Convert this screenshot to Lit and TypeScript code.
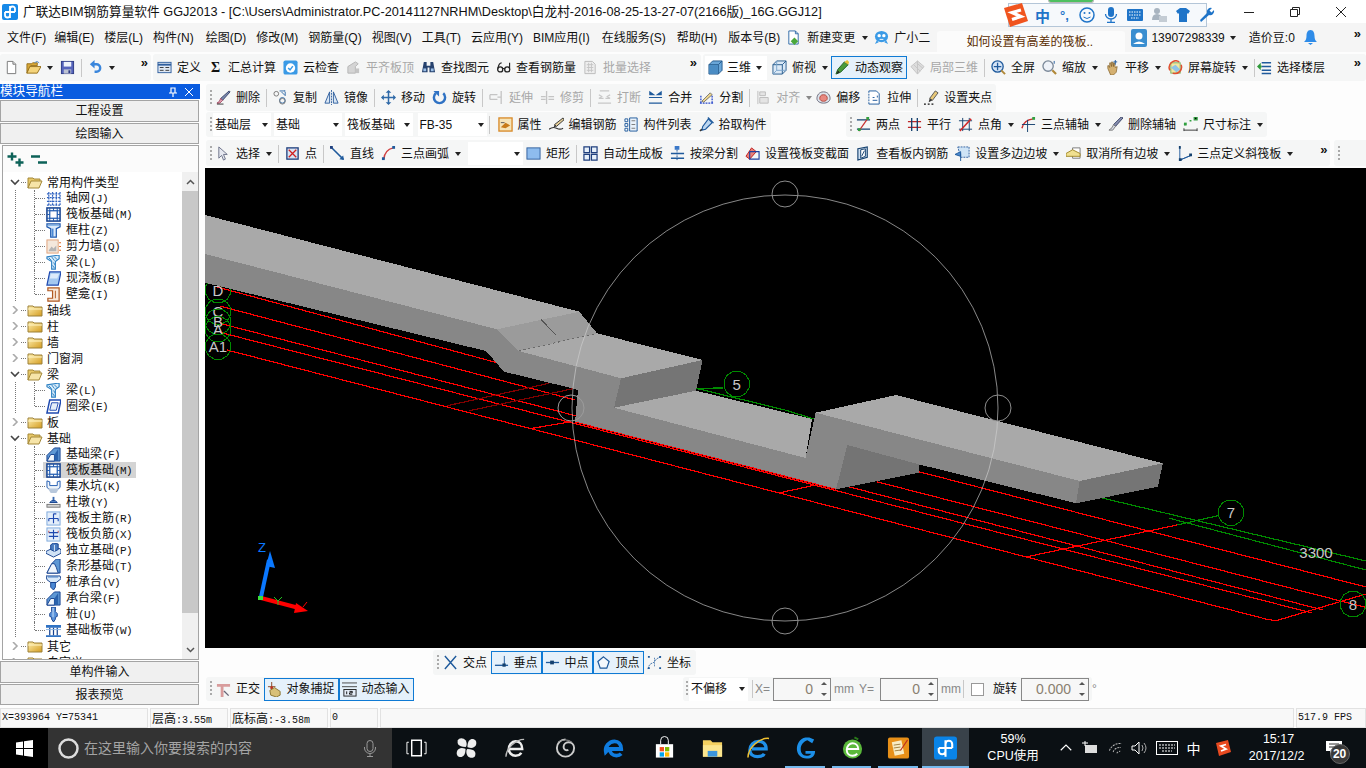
import { LitElement, html, css, svg } from "lit"
import { customElement } from "lit/decorators.js"

// toolbar and tree icons, all on a 16x16 box
const ICONS: Record<string, any> = {
  new: svg`<path d="M3.5 1.5h6l3 3v10h-9z" fill="#fff" stroke="#777"/><path d="M9.5 1.5v3h3" fill="#ddd" stroke="#777"/>`,
  open: svg`<path d="M1 4h5l1-1h5v3H5l-4 8z" fill="#d8a838" stroke="#96701c"/><path d="M4 7h12l-4 7H1z" fill="#f4d47c" stroke="#96701c"/><path d="M9 3q3-3 5 0" stroke="#5a8fd0" fill="none"/>`,
  save: svg`<rect x="1.5" y="1.5" width="13" height="13" fill="#5664bc" stroke="#2c3a84"/><rect x="4" y="2" width="8" height="5" fill="#eef2fa"/><rect x="4" y="10" width="8" height="4.5" fill="#bcc2d2"/><rect x="9" y="11" width="2" height="3" fill="#2c3a84"/>`,
  undo: svg`<path d="M6 4.5h3a4 4 0 0 1 0 8H7" fill="none" stroke="#3a86dc" stroke-width="2.6"/><path d="M7 0L2 4.5 7 9z" fill="#3a86dc"/>`,
  def: svg`<rect x="1" y="2.5" width="14" height="11" fill="#dfe8f4" stroke="#2f5f9e"/><path d="M1 5h14" stroke="#2f5f9e" stroke-width="2"/><path d="M3 8h4M3 11h4M9 8h4M9 11h4" stroke="#333"/>`,
  sigma: svg`<text x="8" y="13" text-anchor="middle" font-family="Liberation Serif" font-size="15" font-weight="700" fill="#111">Σ</text>`,
  cloud: svg`<rect x="0.5" y="0.5" width="15" height="15" rx="2" fill="#3a9ae6"/><circle cx="8" cy="8.5" r="5" fill="#fff"/><path d="M5.5 8.5l2 2 3-4" fill="none" stroke="#3a9ae6" stroke-width="1.6"/>`,
  flush: svg`<path d="M2 7l8-5 3 2-3 3v7H2z" fill="#d4d4d4" stroke="#b4b4b4"/><path d="M10 9h4v5h-4z" fill="#c4c4c4"/>`,
  find: svg`<path d="M3 2h3v4h4V2h3l2 11H9V8H7v5H1z" fill="#26426e"/><rect x="2.5" y="9" width="3" height="3" fill="#9cc0e8"/><rect x="10.5" y="9" width="3" height="3" fill="#9cc0e8"/>`,
  glasses: svg`<circle cx="4.5" cy="10" r="2.7" fill="none" stroke="#222" stroke-width="1.4"/><circle cx="12" cy="10" r="2.7" fill="none" stroke="#222" stroke-width="1.4"/><path d="M7 9h2.5M2 9q1-6 4-6M14.5 9V3" fill="none" stroke="#222" stroke-width="1.2"/>`,
  batch: svg`<path d="M2 1.5h8l3 3v10H2z" fill="#eee" stroke="#bbb"/><path d="M4 5h7M4 8h7M4 11h7M6 3v10M9 3v10" stroke="#c4c4c4"/>`,
  cube: svg`<path d="M1 5l4-4h10v10l-4 4H1z" fill="#6aa6d8" stroke="#245a8c"/><path d="M1 5h10v10M11 5l4-4" fill="none" stroke="#245a8c"/><path d="M1.5 5.5h9v9h-9z" fill="#4a8cc4"/>`,
  top: svg`<path d="M1 5l4-4h10v10l-4 4H1z" fill="#dbe9f6" stroke="#245a8c"/><path d="M1 5h10v10M11 5l4-4" fill="none" stroke="#245a8c"/><path d="M5 1v10l-4 4M5 11h10" fill="none" stroke="#7aa4cc"/>`,
  orbit: svg`<path d="M1 15l2-5 7-8 4 3-8 8z" fill="#4a9a3a" stroke="#1f5f24"/><path d="M10 2l4 3 1-3-2-2z" fill="#e8c038"/><path d="M2 15l3-2-2-2z" fill="#222"/>`,
  local3d: svg`<path d="M1 7l7-6 7 6-7 8z" fill="#ddd" stroke="#c4c4c4"/><path d="M4 5l7 7M7 3l7 6M8 1v14" stroke="#c4c4c4"/>`,
  zoomfull: svg`<circle cx="7" cy="7" r="6" fill="#d4e4f6" stroke="#1f5a9c" stroke-width="1.4"/><path d="M7 3v8M3 7h8" stroke="#1f5a9c" stroke-width="1.4"/><path d="M11 11l4 4" stroke="#b08838" stroke-width="2"/>`,
  zoom: svg`<circle cx="6.5" cy="6.5" r="5.5" fill="#eef2f8" stroke="#7a8898" stroke-width="1.4"/><path d="M11 11l4 4" stroke="#b08838" stroke-width="2.2"/><path d="M13 1v3" stroke="#1f5a9c"/>`,
  pan: svg`<path d="M3 9V6l1 0 1 2V3h1l1 4V2h1l1 5V3h1l1 5 2-1-1 6-3 3H6z" fill="#d4b070" stroke="#7a5820" stroke-width=".7"/><path d="M11 0v5M9 2h4" stroke="#1f5a9c"/>`,
  spin: svg`<rect x="3" y="3" width="10" height="11" fill="#f4e6a0" stroke="#7ab060"/><path d="M3 8l5-3 5 5-4 3z" fill="#8fc4e8"/><path d="M2 11a7 7 0 0 1 10-9" fill="none" stroke="#e05030" stroke-width="1.6"/><path d="M14 5a7 7 0 0 1-9 9" fill="none" stroke="#e05030" stroke-width="1.6"/>`,
  floor: svg`<path d="M5 3h10M5 7h10M5 11h10M5 14.5h10" stroke="#1f5a9c" stroke-width="1.6"/><path d="M0 7l4-4v8z" fill="#2f9a3a"/><path d="M2 7h3" stroke="#2f9a3a" stroke-width="2"/>`,
  erase: svg`<path d="M14 1l1 1-8 9-2-2z" fill="#7a88b0" stroke="#3a4468"/><path d="M5 9l2 2-3 3H1q3-1 4-5z" fill="#e8a8b8" stroke="#a04860"/><path d="M1 15h7" stroke="#333"/>`,
  copy: svg`<circle cx="3.5" cy="4" r="2.5" fill="none" stroke="#777"/><circle cx="10" cy="11" r="3" fill="none" stroke="#2f6aa8"/><circle cx="10" cy="12" r="3" fill="none" stroke="#777"/><path d="M7 1h6l-1 0M13 2v4M9 2l4 4" fill="none" stroke="#2f6aa8"/>`,
  mirror: svg`<path d="M6 2v12H1zM10 2v12h5z" fill="#d8e6f4" stroke="#2f5f9e"/><path d="M8 0v16" stroke="#2f5f9e" stroke-dasharray="2 1"/>`,
  move: svg`<path d="M8 1v14M1 8h14" stroke="#2f6aa8" stroke-width="1.6"/><path d="M8 0l3 3H5zM8 16l3-3H5zM0 8l3 3V5zM16 8l-3 3V5z" fill="#2f6aa8"/>`,
  rot: svg`<path d="M4 3.5a6 6 0 1 0 8 0" fill="none" stroke="#2f72c4" stroke-width="2.6"/><path d="M1.500 1h6v6z" fill="#2f72c4"/>`,
  extend: svg`<path d="M1 5h8M1 10h8M1 5v5M13 1v14M9 7.500h4" fill="none" stroke="#c4c4c4" stroke-width="1.4"/>`,
  trim: svg`<path d="M7 1v14M1 7h5M1 10h5M9 7h6M9 10h6" fill="none" stroke="#c4c4c4" stroke-width="1.4"/>`,
  brk: svg`<path d="M3 1h10M1 14h14M3 9h4M9 9h4M2 5l3 2-3 2M14 5l-3 2 3 2" fill="none" stroke="#c8c8c8" stroke-width="1.4"/>`,
  merge: svg`<path d="M1 8h14M1 14h14M2 2l4 3H2zM14 2l-4 3h4z" fill="#1f5a9c" stroke="#1f5a9c" stroke-width="1.3"/>`,
  split: svg`<path d="M1 14h14M2 6v9M14 6v9" stroke="#2a4acc" stroke-width="1.4" stroke-dasharray="2 1"/><path d="M3 12l9-9 2 2-9 8z" fill="#f0d890" stroke="#555" stroke-width=".8"/>`,
  align: svg`<path d="M2 1v14M4 2h6v4H4zM4 8h9v6H4z" fill="#e4e4e4" stroke="#bcbcbc"/>`,
  offset: svg`<path d="M8 2c5 0 7 4 7 7s-3 5-7 5-7-2-7-5 2-7 7-7z" fill="#dde4ec" stroke="#667"/><path d="M8 5c3 0 4 2 4 4s-2 3-4 3-4-1-4-3 1-4 4-4z" fill="#e88880" stroke="#b04a40"/>`,
  stretch: svg`<path d="M2 1h8l3 3v11H2" fill="#fff" stroke="#1f5a9c"/><path d="M2 1v14" stroke="#1f5a9c" stroke-dasharray="2 1"/><path d="M6 8h2M6 11h5M11 6v2" stroke="#1f5a9c"/>`,
  grippt: svg`<path d="M12 1l3 2-6 8-3-2z" fill="#e8c878" stroke="#555"/><path d="M6 9l3 2-4 2z" fill="#333"/><path d="M0 15h2M4 15h2M8 15h2" stroke="#111" stroke-width="1.4"/>`,
  attr: svg`<rect x="1" y="1" width="14" height="14" fill="#f6e4b8" stroke="#d88a28" stroke-width="1.4"/><path d="M3 11l5-5 5 3-5 3z" fill="#c87a18"/><path d="M3 6h4" stroke="#555"/>`,
  pen: svg`<path d="M15 1l1 2-8 7-2-2z" fill="#e8d098" stroke="#333"/><path d="M6 8l2 2-3 1z" fill="#333"/><path d="M0 13q4-3 8-1t7 0" fill="none" stroke="#333" stroke-width="1.2"/>`,
  list: svg`<path d="M1 2h3v3H1zM1 7h3v3H1zM1 12h3v3H1z" fill="#fff" stroke="#1f5a9c"/><path d="M6 1h8v14H6z" fill="#eaf2fa" stroke="#1f5a9c"/><path d="M8 4h4M8 8h4M8 12h4" stroke="#777"/>`,
  pick: svg`<path d="M10 2l4 4-7 7-4 1 1-4z" fill="#bcd6f0" stroke="#1f5a9c" stroke-width="1.2"/><path d="M9 1l1-1 6 6-1 1z" fill="#1f5a9c"/><path d="M1 15l2-2" stroke="#333" stroke-width="1.6"/>`,
  twopt: svg`<path d="M1 3h14M1 13h14" stroke="#14406e" stroke-width="1.3"/><path d="M3 15L13 1" stroke="#c83030" stroke-width="1.3"/><path d="M11 0h3v3h-3zM2 12h3v3H2z" fill="#30a040"/>`,
  para: svg`<path d="M1 5h14M1 11h14" stroke="#c02828" stroke-width="1.4"/><path d="M5 1v14M11 1v14" stroke="#14406e" stroke-width="1.4"/>`,
  angle: svg`<path d="M1 4h14M1 13h14M5 1v14M12 1v14" stroke="#14406e"/><path d="M2 15L14 2" stroke="#d02828" stroke-width="1.6"/>`,
  arcaux: svg`<path d="M1 12Q3 3 13 2" fill="none" stroke="#c83030" stroke-width="1.6"/><path d="M1 8h14M7 3v13" stroke="#14406e"/><path d="M12 0h3v3h-3z" fill="#30a040"/>`,
  brush2: svg`<path d="M14 0l2 1-8 9-2-2z" fill="#888fb0" stroke="#3a4468"/><path d="M6 8l2 2-3 4H1q4-2 5-6z" fill="#d8dce8" stroke="#777"/>`,
  dim: svg`<path d="M1 12v3M15 12v3M1 14h14" stroke="#333"/><path d="M1 8l2 0M7 4h2M12 0h3v3h-3z" stroke="#30a040" stroke-width="1.4"/><path d="M1 6h3v3H1z" fill="#30a040"/>`,
  cursor: svg`<path d="M3 1v12l3-3 2 5 2-1-2-5h4z" fill="#e6e8f0" stroke="#6a7088"/>`,
  point: svg`<rect x="2" y="2" width="12" height="12" fill="#d8e4f4" stroke="#1f3f7e" stroke-width="1.4"/><path d="M4 4l8 8M12 4l-8 8" stroke="#d02020" stroke-width="1.4"/>`,
  line: svg`<path d="M1 1l13 13" stroke="#1f5a9c" stroke-width="1.6"/><path d="M15 15l-5-1 4-4z" fill="#1f5a9c"/><path d="M0 0h3v3H0z" fill="#1f3f7e"/>`,
  arc: svg`<path d="M3 14Q4 4 13 2" fill="none" stroke="#d04040" stroke-width="1.6"/><path d="M1 12h3v3H1z" fill="#1f5a9c"/><path d="M12 0h3v3h-3z" fill="#1f5a9c"/>`,
  rect: svg`<rect x="1" y="2" width="14" height="12" fill="#8ebcee" stroke="#2f5f9e"/>`,
  auto: svg`<path d="M1 1h6v6H1zM9 1h6v6H9zM1 9h6v6H1zM9 9h6v6H9z" fill="#e6f0fa" stroke="#1f3f7e" stroke-width="1.3"/>`,
  bsplit: svg`<rect x="5" y="0" width="5" height="4" fill="#3a78c8"/><path d="M1 8h14M1 13h14" stroke="#1f5a9c" stroke-width="1.6"/><path d="M7.500 4v12" stroke="#1f5a9c" stroke-dasharray="2 1"/>`,
  varsec: svg`<path d="M7 2l5 4-7 8-4-3z" fill="#e88078" stroke="#c02020"/><path d="M5 6h10v8H5z" fill="none" stroke="#1f3f9e" stroke-width="1.2"/>`,
  inner: svg`<path d="M2 3l10-2v11L2 15z" fill="#cfe0f2" stroke="#14406e" stroke-width="1.2"/><path d="M5 4l5-1v8l-5 2z" fill="#fff" stroke="#14406e"/><path d="M9 5l-3 6" stroke="#14406e"/>`,
  slopes: svg`<path d="M3 1l12 0v11H6z" fill="#cfe4f6" stroke="#2f5f9e" stroke-dasharray="2 1"/><path d="M0 9l6-3v5zM6 16V8" stroke="#1f5a9c" fill="#4a88cc"/>`,
  noslope: svg`<path d="M7 2h8v11H7z" fill="#fff" stroke="#777"/><path d="M0 8l7-4 8 4v3H0z" fill="#f0e090" stroke="#a08828"/>`,
  threept: svg`<path d="M3 1v14M3 15l12-5z" fill="#bcd8f6" stroke="#1f5a9c"/><path d="M2 0h2v3H2zM2 13h3v3H2zM13 8h3v3h-3z" fill="#14406e"/>`,
  cross: svg`<path d="M2 1l12 14M14 1L2 15" stroke="#1f5a9c" stroke-width="1.5"/>`,
  perp: svg`<path d="M1 11h14" stroke="#1f5a9c" stroke-width="1.4"/><path d="M11 1v10" stroke="#1f5a9c"/><rect x="9" y="9" width="3.500" height="3.500" fill="#14406e"/>`,
  mid: svg`<path d="M1 8h14" stroke="#1f5a9c" stroke-width="1.4"/><rect x="5.500" y="6" width="4" height="4" fill="#14406e"/>`,
  vertex: svg`<path d="M8 2l6 5-2.500 7h-7L2 7z" fill="#f4f8fc" stroke="#1f5a9c" stroke-width="1.3"/>`,
  coord: svg`<path d="M1 15c2-8 5-5 7-8s2-3 7-5" fill="none" stroke="#1f5a9c" stroke-dasharray="2 1"/><path d="M1 1h2v2H1zM13 1h2v2h-2zM1 13h2v2H1zM13 13h2v2h-2z" fill="#1f5a9c"/><path d="M8 3v10" stroke="#1f5a9c" stroke-dasharray="1 1"/>`,
  ortho: svg`<path d="M1 2h14v3H8v11H5V5H1z" fill="#d89c9c"/><path d="M9 9l5 5-1 1-5-5z" fill="#667"/>`,
  snap: svg`<path d="M5 0v11M1 5h8" stroke="#884422"/><circle cx="5" cy="6" r="1.600" fill="#c03020"/><path d="M3 9l5-3 6 4v4l-4 2-6-2z" fill="#d8c078" stroke="#8a7430"/>`,
  dyn: svg`<path d="M0 1h16M0 5h16" stroke="#444"/><rect x="2" y="8" width="13" height="7" fill="#e4ecf6" stroke="#222"/><path d="M5 10v3M8 10h3v1.500H8V13h3" fill="none" stroke="#111"/>`,
  doc: svg`<path d="M3 1h7l3 3v11H3z" fill="#fff" stroke="#2f6aa8"/><path d="M10 1v3h3" fill="none" stroke="#2f6aa8"/><path d="M9 8l4 4-4 4-4-4z" fill="#4aa83a"/>`,
  bot: svg`<ellipse cx="8" cy="7" rx="7" ry="6" fill="#3a9ae6"/><path d="M3 11l-2 4 4-2M13 11l2 4-4-2" fill="#3a9ae6"/><circle cx="5.500" cy="6" r="1.800" fill="#fff"/><circle cx="10.500" cy="6" r="1.800" fill="#fff"/><path d="M6 10h4" stroke="#fff"/>`,
  // tree icons
  t_grid: svg`<path d="M3 1v14M7 1v14M11 1v14M15 1v14M1 3h14M1 7h14M1 11h14M1 15h14" stroke="#2f62c0" stroke-width="1.300" stroke-dasharray="2 1"/>`,
  t_raft: svg`<rect x="1" y="1" width="14" height="14" fill="#f4f8fc" stroke="#14408e" stroke-width="1.600"/><rect x="4" y="4" width="8" height="8" fill="#fff" stroke="#1f5ab0" stroke-width="1.300"/><path d="M1 4h3M1 8h3M1 12h3M12 4h3M12 8h3M12 12h3M4 1v3M8 1v3M12 1v3M4 12v3M8 12v3M12 12v3" stroke="#1f5ab0"/>`,
  t_col: svg`<path d="M1 1h14v3l-4 2v9H5V6L1 4z" fill="#dceafa" stroke="#1f5ab0" stroke-width="1.300"/><path d="M6 6h2v9H6z" fill="#4a88d4"/><path d="M2 2h12v1H2z" fill="#7ab0e4"/>`,
  t_wall: svg`<rect x="1" y="1" width="12" height="14" fill="#f4e8dc" stroke="#e0a078"/><path d="M3 12l3-4 2 2 3-3v6H3z" fill="#b4b4b4"/><path d="M14 4h2M14 8h2M14 12h2" stroke="#e06820" stroke-width="1.300"/>`,
  t_beam: svg`<path d="M1 2l13-2v4l-4 3v8H6V7L1 4z" fill="#d8ecfa" stroke="#2f82c4" stroke-width="1.200"/><path d="M3 3l3 3M6 2l3 4M9 2l3 3M8 8l2 3M7 11l2 3" stroke="#2f82c4"/>`,
  t_slab: svg`<path d="M4 1h12l-3 14H1z" fill="#a4c8f0" stroke="#1f4ab0" stroke-width="1.300"/><path d="M5 3h9l-2 5H4z" fill="#dceafa"/>`,
  t_niche: svg`<path d="M2 1h12v14H2v-3h5V4H2z" fill="#f8e8d8" stroke="#b05820" stroke-width="1.300"/><path d="M10 4v8" stroke="#b05820"/>`,
  t_ring: svg`<path d="M4 1h12l-3 14H1z" fill="#fff" stroke="#1f4ab0" stroke-width="1.600"/><path d="M6 4h7l-2 8H4z" fill="#e4eef8" stroke="#1f4ab0"/>`,
  t_fbeam: svg`<path d="M1 15V9l5-5 3-3h6v14z" fill="#5e98d4" stroke="#14408e"/><path d="M1 15l4-7 4 0v7z" fill="#f0f6fc" stroke="#14408e"/><path d="M9 8l4-6v13H9z" fill="#2a62ac"/>`,
  t_pit: svg`<path d="M1 2l3 1v4h8V3l3-1v7l-4 3H5L1 9z" fill="#eef4fa" stroke="#1f5ab0"/><path d="M2 10h12l-3 5H5z" fill="#b8c8dc"/>`,
  t_pier: svg`<path d="M7 2h2v5H7z" fill="#3a6ab0"/><path d="M4 8l2-2h4l2 2z" fill="#5a8ac8" stroke="#14408e"/><rect x="1" y="10" width="14" height="3" fill="#d4d4d4" stroke="#777"/>`,
  t_rmain: svg`<rect x="1" y="1" width="14" height="14" fill="#e4eefa" stroke="#7aa8dc"/><path d="M3 8h10M8 3v10M8 3h3M3 8v3M13 8v3" fill="none" stroke="#1f4ab0" stroke-width="1.200"/>`,
  t_rneg: svg`<rect x="1" y="1" width="14" height="14" fill="#e4eefa" stroke="#7aa8dc"/><path d="M3 6h10M3 10h10M8 3v10" fill="none" stroke="#1f4ab0" stroke-width="1.200"/><path d="M3 4v2M13 4v2" stroke="#c04040"/>`,
  t_iso: svg`<path d="M0 9l6-3 9 0 1 2v3l-8 4-8-4z" fill="#cfe2f6" stroke="#14408e"/><path d="M5 7V2l3-2 5 1v6l-4 2z" fill="#4a7cc0" stroke="#14408e"/><path d="M9 2v7" stroke="#dceafa"/>`,
  t_strip: svg`<path d="M1 15l3-6 3-5 4-4h4v15z" fill="#5e98d4" stroke="#14408e"/><path d="M1 15l3-6 2-4h3l2 4 2 6z" fill="#f0f6fc" stroke="#14408e"/>`,
  t_cap: svg`<path d="M0 1h15l1 3-5 4H5L1 5z" fill="#d8e8f8" stroke="#14408e"/><path d="M5 8h5v5l-2 3-3-3z" fill="#4a88d4" stroke="#14408e"/><path d="M2 2h11" stroke="#5a8ac8" stroke-width="1.500"/>`,
  t_pile: svg`<path d="M6 0h4v5l2 2v3l-2 1v2l-2 3-2-3v-2L4 10V7l2-2z" fill="#5a94dc" stroke="#14408e"/><path d="M7 1h1v10H7z" fill="#cfe2f6"/>`,
  t_band: svg`<path d="M0 2h16v3H0zM0 13h16v2H0z" fill="#2f72c4"/><path d="M4 5v8M8 5v8M12 5v8" stroke="#14408e" stroke-width="1.300"/><path d="M0 7h16" stroke="#8ab4e4"/>`,
}

const ic = (n: string, cls = "ic") => html`<svg class=${cls} viewBox="0 0 16 16">${ICONS[n]}</svg>`

type Item = { i?: string; t?: string; c?: 1; d?: 1; a?: 1; b?: 1; m?: number; k?: string; w?: number }
const SEP: Item = { k: "sep" }
const GRIP: Item = { k: "grip" }
const MORE: Item = { k: "more" }
const it = (i: string, t?: string, o: Item = {}): Item => ({ i, t, ...o })
const dis = { d: 1 } as Item
const car = { c: 1 } as Item

const ROW1A: Item[] = [
  it("new"), it("open", undefined, car), it("save"), SEP, it("undo", undefined, car), MORE,
]
const ROW1B: Item[] = [
  it("def", "定义"), it("sigma", "汇总计算"), it("cloud", "云检查"), it("flush", "平齐板顶", dis),
  it("find", "查找图元"), it("glasses", "查看钢筋量"), it("batch", "批量选择", dis), MORE,
]
const ROW1C: Item[] = [
  { k: "white3d" }, it("top", "俯视", car), it("orbit", "动态观察", { a: 1 }), it("local3d", "局部三维", dis), SEP,
  it("zoomfull", "全屏"), it("zoom", "缩放", car), it("pan", "平移", car), it("spin", "屏幕旋转", car), SEP,
  it("floor", "选择楼层", { m: -4 }), MORE,
]
const ROW2: Item[] = [
  GRIP, it("erase", "删除"), SEP, it("copy", "复制"), it("mirror", "镜像"), SEP, it("move", "移动"), it("rot", "旋转"), SEP,
  it("extend", "延伸", dis), it("trim", "修剪", dis), SEP, it("brk", "打断", dis), it("merge", "合并"), it("split", "分割"), SEP,
  it("align", "对齐", { d: 1, c: 1 }), it("offset", "偏移", { m: -3 }), it("stretch", "拉伸"), SEP, it("grippt", "设置夹点"),
]
const ROW3A: Item[] = [
  GRIP, { k: "combo", t: "基础层", w: 58, m: -3 }, { k: "combo", t: "基础", w: 68 }, { k: "combo", t: "筏板基础", w: 68 }, { k: "combo", t: "FB-35", w: 69, m: 1.5 }, SEP,
  it("attr", "属性", { m: 2 }), it("pen", "编辑钢筋"), it("list", "构件列表"), it("pick", "拾取构件"),
]
const ROW3B: Item[] = [
  GRIP, it("twopt", "两点"), it("para", "平行"), it("angle", "点角", car), it("arcaux", "三点辅轴", car),
  it("brush2", "删除辅轴"), it("dim", "尺寸标注", car),
]
const ROW4: Item[] = [
  GRIP, it("cursor", "选择", car), SEP, it("point", "点"), SEP, it("line", "直线"), it("arc", "三点画弧", car),
  { k: "combo", t: "", w: 55 }, it("rect", "矩形"), SEP, it("auto", "自动生成板"), it("bsplit", "按梁分割"),
  it("varsec", "设置筏板变截面"), it("inner", "查看板内钢筋"), it("slopes", "设置多边边坡", car),
  it("noslope", "取消所有边坡", car), it("threept", "三点定义斜筏板", car), MORE,
]
const SNAP: Item[] = [
  GRIP, it("cross", "交点"), it("perp", "垂点", { b: 1 }), it("mid", "中点", { b: 1 }), it("vertex", "顶点", { b: 1 }), it("coord", "坐标"),
]
const ORTHO: Item[] = [GRIP, it("ortho", "正交"), it("snap", "对象捕捉", { b: 1 }), it("dyn", "动态输入", { b: 1 })]

const MENU = ["文件(F)", "编辑(E)", "楼层(L)", "构件(N)", "绘图(D)", "修改(M)", "钢筋量(Q)", "视图(V)", "工具(T)", "云应用(Y)", "BIM应用(I)", "在线服务(S)", "帮助(H)", "版本号(B)"]

type Kid = [string, string, string, number?]
type Node = { t: string; kids?: Kid[] }
const TREE: Node[] = [
  { t: "常用构件类型", kids: [["t_grid", "轴网", "J"], ["t_raft", "筏板基础", "M"], ["t_col", "框柱", "Z"], ["t_wall", "剪力墙", "Q"], ["t_beam", "梁", "L"], ["t_slab", "现浇板", "B"], ["t_niche", "壁龛", "I"]] },
  { t: "轴线" }, { t: "柱" }, { t: "墙" }, { t: "门窗洞" },
  { t: "梁", kids: [["t_beam", "梁", "L"], ["t_ring", "圈梁", "E"]] },
  { t: "板" },
  { t: "基础", kids: [["t_fbeam", "基础梁", "F"], ["t_raft", "筏板基础", "M", 1], ["t_pit", "集水坑", "K"], ["t_pier", "柱墩", "Y"], ["t_rmain", "筏板主筋", "R"], ["t_rneg", "筏板负筋", "X"], ["t_iso", "独立基础", "P"], ["t_strip", "条形基础", "T"], ["t_cap", "桩承台", "V"], ["t_fbeam", "承台梁", "F"], ["t_pile", "桩", "U"], ["t_band", "基础板带", "W"]] },
  { t: "其它" }, { t: "自定义" },
]

// 3d view geometry, in page coordinates (the svg viewBox starts at 205,168)
const REDS = [
  "216,286.700 497,362.700", "918.600,471.700 1366,587", "219.800,306 575,400", "876.600,481.700 1366,607.500",
  "219.800,323.300 1323,610", "219.800,332.300 1312,613", "227,350 1267,619.300 1276,620.700 1366,594",
  "532.400,428.300 571,421.700", "1027.200,556.700 1177,525", "780,492.700 815.600,485",
]
const DIMREDS = ["447.300,405.700 549,383.300", "469.500,410.700 575,388.300"]
const GREENS = ["696,388.300 785,410 814,419", "1098,497 1366,561", "1169.500,518.300 1366,570", "696,388.300 723,388", "1177,525 1218,515.700"]
const BUBBLES: [number, number, string][] = [
  [218, 290, "D"], [218, 311.7, "C"], [218, 321.7, "B"], [218, 329.3, "A"], [218, 346.7, "A1"],
  [736.6, 384, "5"], [1231, 512.7, "7"], [1353, 604, "8"],
]
const bubble = (cx: number, cy: number, n = 12, r = 13) =>
  Array.from({ length: n }, (_, k) => {
    const a = (k / n) * Math.PI * 2 + Math.PI / n
    return `${(cx + r * Math.cos(a)).toFixed(1)},${(cy + r * Math.sin(a)).toFixed(1)}`
  }).join(" ")

@customElement("app-root")
export class AppRoot extends LitElement {
  static styles = css`
    :host { display: block; width: 1366px; height: 768px; overflow: hidden; }
    .shell {
      position: relative; width: 1366px; height: 768px; display: flex; flex-direction: column;
      background: #fdfdfd; color: #111; overflow: hidden;
      font: 12px/16px "Liberation Sans", "Noto Sans CJK SC", sans-serif;
    }
    svg { display: block; flex: none; }
    .ic { width: 15px; height: 15px; }

    /* title + menu */
    .title { height: 23px; display: flex; align-items: center; background: #fff; padding-left: 2px; font-size: 12.700px; flex: none; }
    .title .logo { width: 16px; height: 16px; margin-right: 5px; }
    .title .txt { flex: 1; white-space: nowrap; }
    .winbtns { display: flex; margin-right: 20px; gap: 36px; align-items: center; }
    .winbtns svg { width: 10px; height: 10px; }
    .menu { height: 29px; margin-bottom: 2px; background: #f5f5f5; display: flex; align-items: center; padding: 0 5px 0 7px; gap: 10px; flex: none; white-space: nowrap; }
    .menu > span:nth-child(2), .menu > span:nth-child(3), .menu > span:nth-child(4) { position: relative; left: -2px; }
    .menu > span:nth-child(12) { margin-left: 2px; }
    .menu > span:nth-child(13), .menu > span:nth-child(14) { margin-left: 1px; }
    .menu .end { display: flex; align-items: center; gap: 4px; }
    .menu .doc { margin-left: -4px; gap: 6px; }
    .menu .bot { margin-left: -4px; gap: 5px; }
    .menu .user { margin-left: -4px; }
    .menu .beans { margin-left: 3px; }
    .menu .bell { width: 13px; height: 15px; margin-left: -1px; }
    .menu .more { margin: -8px 0 0 auto; align-self: center; }
    .caretgap { margin-left: 6px; }
    .ask { width: 188px; height: 21px; margin: 8px 0 0 -3px; background: #fbfbfb; color: #5a2d00; padding-left: 29px; display: flex; align-items: center; box-sizing: border-box; border-radius: 3px 3px 0 0; }
    .userpic { width: 16px; height: 18px; }

    /* toolbars */
    .row { display: flex; flex: none; white-space: nowrap; }
    .tb { display: flex; align-items: center; gap: 7px; background: #f5f6f6; border-radius: 3px; padding: 0 4px; box-sizing: border-box; height: 100%; }
    .it { display: flex; align-items: center; gap: 5px; height: 100%; }
    .it.d { color: #a8a8a8; }
    .it.a { background: #e5f1fb; box-shadow: inset 0 0 0 1px #0f7ad4; padding: 0 4px; margin: 0 -4px; height: 23px; }
    .it.b { background: #e5f1fb; box-shadow: inset 0 0 0 1px #0f7ad4; padding: 0 4px 0 3px; margin: 0 -3.500px; height: 23px; }
    .caret { width: 0; height: 0; border: 3.500px solid transparent; border-top: 4px solid #222; border-bottom: 0; margin-left: 1px; }
    .it.d .caret { border-top-color: #888; }
    .sep { width: 1px; height: 18px; background: #c8c8c8; margin: 0 -1px; flex: none; }
    .grip { width: 2px; height: 16px; flex: none; margin-right: -3px; background: repeating-linear-gradient(#aaa 0 2px, transparent 2px 4px); }
    .more { font: 700 13px/10px "Liberation Sans", sans-serif; align-self: flex-start; margin-top: 4px; margin-left: auto; }
    .combo { display: flex; align-items: center; justify-content: space-between; background: #fff; height: 23px; padding: 0 3px 0 2px; box-sizing: border-box; flex: none; margin-right: -4px; }
    .combo.off { width: 59px; margin: 0 0 0 1px; color: #111; }
    .white3d { display: flex; align-items: center; gap: 4px; background: #fff; height: 24px; padding-left: 3px; box-sizing: border-box; width: 62px; margin-right: -2px; }
    .r1 { height: 27px; margin-bottom: 3px; gap: 2px; }
    .r1 .tb:nth-child(1) { width: 151px; padding-right: 3px; }
    .r1 .tb:nth-child(2) { width: 548px; padding-right: 4px; }
    .r1 .tb:nth-child(3) { width: 663px; padding: 0 5px 0 2px; }

    /* main split */
    .main { flex: 1; display: flex; min-height: 0; }
    .side { width: 200px; margin-right: 5px; display: flex; flex-direction: column; flex: none; }
    .work { flex: 1; display: flex; flex-direction: column; min-width: 0; }

    /* sidebar */
    .navhd { height: 15px; background: #0a5ce0; color: #fff; font-size: 12.600px; line-height: 15px; display: flex; align-items: center; margin-bottom: 1px; flex: none; }
    .navhd .name { flex: 1; }
    .navhd svg { width: 10px; height: 10px; margin-right: 6px; }
    .btn { flex: none; border: 1px solid #a4a4a4; background: #f0f0f0; display: flex; align-items: center; justify-content: center; box-sizing: border-box; margin-right: 1px; margin-bottom: 1px; }
    .b22 { height: 22px; }
    .b21 { height: 21px; }
    .panel { height: 515px; margin: 0 1px 1px 2px; border: 1px solid #a4a4a4; box-sizing: border-box; display: flex; flex-direction: column; background: #fff; flex: none; }
    .pm { height: 26px; display: flex; align-items: center; gap: 7px; padding-left: 3.500px; background: #fbfbfb; flex: none; }
    .pm svg { width: 17px; height: 15px; }
    .treewrap { flex: 1; display: flex; min-height: 0; }
    .tree { flex: 1; overflow: hidden; padding-top: 2px; background: #fff; }
    .sb { width: 16px; background: #f0f0f0; display: flex; flex-direction: column; flex: none; }
    .sb .arr { height: 19px; display: flex; align-items: center; justify-content: center; }
    .sb .arr svg { width: 9px; height: 6px; }
    .sb .thumb { height: 422px; background: #c8c8c8; }
    .sb .gap { flex: 1; }

    .node, .kid { position: relative; height: 16px; display: flex; align-items: center; white-space: nowrap; }
    .node .chev { position: absolute; left: 7px; width: 10px; height: 8px; }
    .node .fold { position: absolute; left: 24px; width: 16px; height: 14px; }
    .node .lab { position: absolute; left: 44px; margin-top: 2px; }
    .node::after { content: ""; position: absolute; left: 18px; top: 8px; width: 5px; border-top: 1px dotted #777; }
    .kid { padding-left: 40px; background: repeating-linear-gradient(#777 0 1px, transparent 1px 2px) 12px 0 / 1px 100% no-repeat; }
    .kid::before { content: ""; position: absolute; left: 31px; top: 0; bottom: 0; border-left: 1px dotted #777; }
    .kid.last::before { bottom: 8px; }
    .kid::after { content: ""; position: absolute; left: 32px; top: 8px; width: 10px; border-top: 1px dotted #777; }
    .kid .lbl { position: relative; z-index: 1; display: flex; align-items: center; height: 16px; padding: 0 4px 0 3px; gap: 5px; }
    .kid .lbl.sel { background: #d4d4d4; }
    .kid .tic { width: 15px; height: 15px; }
    .key { font: 11px "Liberation Mono", monospace; letter-spacing: -0.600px; }

    /* canvas */
    .r2 { height: 27px; margin-bottom: 1px; }
    .r3 { height: 25px; margin-bottom: 3px; }
    .r4 { height: 26px; margin-bottom: 2px; gap: 4px; }
    .r2 .tb { width: 790px; padding-left: 4px; }
    .r3 .tb:nth-child(1) { width: 565px; }
    .r3 .tb:nth-child(2) { width: 421px; margin-left: 75px; }
    .r4 .tb { padding-top: 1px; }
    .r4 .tb:nth-child(1) { width: 1124px; margin-left: 1px; padding-right: 2px; }
    .r4 .tb:nth-child(1) .more { margin: 0 0 8px 20px; align-self: center; }
    .r4 .tb:nth-child(2) { flex: 1; border-radius: 3px 0 0 3px; }
    .r2 .tb, .r3 .tb:nth-child(1) { margin-left: 1px; }
    .view { height: 480px; background: #000; flex: none; }
    .view svg { width: 1161px; height: 480px; }

    /* below the canvas */
    .snaprow { height: 25px; margin: 2px 0 2px 228px; }
    .snaprow .tb { width: 263px; }
    .ctlrow { height: 24px; margin-top: 0; gap: 269px; padding-left: 1px; }
    .ctlrow .tb:first-child { width: 208px; padding-right: 0; }
    .ctlrow .tb:last-child { width: 409px; padding: 0 3px; gap: 3px; color: #888; }
    .ctlrow .black { color: #111; }
    .ctlrow .sp1 { margin-left: 1px; }
    .ctlrow .yl { margin: 0 3px 0 2px; }
    .ctlrow .rot { margin-left: 1px; }
    .spin { width: 58px; height: 23px; border: 1px solid #888; background: #f7f7f7; box-sizing: border-box; display: flex; align-items: center; justify-content: flex-end; flex: none; color: #8a8070; font-size: 14px; }
    .spin.w { width: 68px; }
    .spin .sa { width: 13px; height: 100%; display: flex; flex-direction: column; justify-content: space-around; align-items: center; margin-left: 4px; }
    .up, .down { width: 0; height: 0; border: 3px solid transparent; border-bottom: 0; border-top: 3px solid #555; }
    .up { border-top: 0; border-bottom: 3px solid #555; }
    .chk { width: 11px; height: 11px; border: 1px solid #999; background: #fff; flex: none; margin: 0 6px 0 5px; }

    /* status bar */
    .status { height: 20px; display: flex; gap: 2px; background: #fbfbfb; flex: none; font: 10px/18px "Liberation Mono", "Noto Sans CJK SC", monospace; }
    .cell { border: 1px solid #e2e2e2; background: #f8f8f8; box-sizing: border-box; padding-left: 1px; height: 20px; flex: none; white-space: nowrap; }
    .cell b { font: 12px/18px "Noto Sans CJK SC", sans-serif; }

    /* taskbar */
    .task { height: 40px; display: flex; background: #0b1014; color: #fff; align-items: stretch; flex: none; }
    .start { width: 48px; background: #000; display: flex; align-items: center; justify-content: center; }
    .start svg { width: 17px; height: 17px; }
    .search { width: 344px; background: #333; display: flex; align-items: center; color: #a4a4a4; font-size: 14px; position: relative; }
    .search .ring { width: 21px; height: 21px; margin: 0 5.500px 0 9.500px; }
    .search .mic { width: 14px; height: 17px; margin-left: auto; margin-right: 15px; }
    .tile { width: 49.500px; display: flex; align-items: center; justify-content: center; position: relative; }
    .tile.n { width: 46.600px; }
    .tile svg { width: 23px; height: 24px; }
    .tile.run::after { content: ""; position: absolute; left: 3px; right: 4px; bottom: 0; height: 2px; background: #76b9ed; }
    .tile.act { background: #39424a; }
    .tile.act::after { left: 0; right: 0; }
    .cpu { width: 89px; text-align: center; font-size: 12.500px; line-height: 17px; padding-top: 3px; flex: none; }
    .tray { display: flex; align-items: center; flex: 1; position: relative; }
    .tray svg { width: 16px; height: 16px; }
    .tray .up1 { width: 12px; margin-left: 2px; }
    .tray .m10 { margin-left: 10px; }
    .tray .m7 { margin-left: 7px; }
    .tray .kb { width: 22px; margin-left: 9px; }
    .tray .zh { font: 14px "Noto Sans CJK SC", sans-serif; margin: 0 14px 0 9px; }
    .clock { width: 60px; text-align: center; font-size: 12.500px; line-height: 17px; margin-left: 16px; }
    .clock div:first-child { padding-left: 4px; }
    .note { position: relative; margin-left: 19px; }
    .badge { position: absolute; left: 4px; top: 4px; width: 20px; height: 20px; border-radius: 50%; background: #3a3a3a; border: 1px solid #666; box-sizing: border-box; font: 700 12px/18px "Liberation Sans", sans-serif; text-align: center; }

    /* ime float */
    .ime { position: absolute; left: 1008px; top: 3px; width: 199px; height: 24px; box-sizing: border-box; background: #f6f9fc; border: 1px solid #b4c6d8; display: flex; align-items: center; padding-left: 26px; gap: 8px; color: #1f74c8; }
    .ime svg { width: 16px; height: 16px; }
    .ime .zh { font: 700 15px "Noto Sans CJK SC", sans-serif; }
    .ime .pt { font: 700 13px "Liberation Sans", sans-serif; width: 12px; margin: 0 2px; }
    .imes { position: absolute; left: 1003px; top: 2px; width: 26px; height: 26px; }
    .imetop { position: absolute; left: 1048px; top: 0; width: 46px; height: 3px; background: #4ec060; border: 1px solid #b8b8b8; border-top: 0; box-sizing: border-box; border-radius: 0 0 8px 8px; }
  `

  item(x: Item) {
    const st = x.m ? `margin-left:${x.m}px` : ""
    if (x.k === "sep") return html`<div class="sep"></div>`
    if (x.k === "grip") return html`<div class="grip"></div>`
    if (x.k === "more") return html`<div class="more">»</div>`
    if (x.k === "white3d") return html`<div class="white3d">${ic("cube")}<span>三维</span><div class="caret caretgap"></div></div>`
    if (x.k === "combo") return html`<div class="combo" style="width:${x.w}px;${st}"><span>${x.t}</span><div class="caret"></div></div>`
    const cls = `it${x.d ? " d" : ""}${x.a ? " a" : ""}${x.b ? " b" : ""}`
    return html`<div class=${cls} style=${st}>${ic(x.i!)}${x.t ? html`<span>${x.t}</span>` : ""}${x.c ? html`<div class="caret"></div>` : ""}</div>`
  }

  bar(items: Item[]) {
    return html`<div class="tb">${items.map((x) => this.item(x))}</div>`
  }

  renderTitle() {
    return html`<div class="title">
      <svg class="logo" viewBox="0 0 16 16"><rect width="16" height="16" rx="2" fill="#1689e8"/><path d="M8 2v12M3 8h10M8 5a2.500 2.500 0 0 1 5 0v3M3 8v3a2.500 2.500 0 0 0 5 0" fill="none" stroke="#fff" stroke-width="1.800"/></svg>
      <div class="txt">广联达BIM钢筋算量软件 GGJ2013 - [C:\\Users\\Administrator.PC-20141127NRHM\\Desktop\\白龙村-2016-08-25-13-27-07(2166版)_16G.GGJ12]</div>
      <div class="winbtns">
        <svg viewBox="0 0 10 10"><path d="M0 5.500h10" stroke="#222"/></svg>
        <svg viewBox="0 0 10 10"><path d="M.5 2.500h7v7h-7zM2.500 2.500v-2h7v7h-2" fill="none" stroke="#222"/></svg>
        <svg viewBox="0 0 10 10"><path d="M0 0l10 10M10 0L0 10" stroke="#222"/></svg>
      </div>
    </div>`
  }

  renderMenu() {
    return html`<div class="menu">
      ${MENU.map((m) => html`<span>${m}</span>`)}
      <div class="end doc">${ic("doc")}<span>新建变更</span><div class="caret caretgap"></div></div>
      <div class="end bot">${ic("bot")}<span>广小二</span></div>
      <div class="ask">如何设置有高差的筏板..</div>
      <div class="end user">
        <svg class="userpic" viewBox="0 0 16 18"><rect width="16" height="18" rx="2" fill="#3a8ed0"/><circle cx="8" cy="7" r="3.500" fill="#fff"/><path d="M2 15q6-5 12 0z" fill="#fff"/></svg>
        <span>13907298339</span><div class="caret caretgap"></div>
      </div>
      <div class="end beans"><span>造价豆:0</span></div>
      <svg class="bell" viewBox="0 0 13 15"><path d="M6.500 0c3 0 4 3 4 6s1 5 2.500 6H0c1.500-1 2.500-3 2.500-6s1-6 4-6z" fill="#2f8ce8"/><path d="M4 13h5l-2.500 2z" fill="#2f8ce8"/></svg>
      <div class="more">»</div>
    </div>`
  }

  renderTree() {
    const folder = (open: boolean) => open
      ? svg`<path d="M1 3h5l1 1h6v3H5L1 13z" fill="#e8c868" stroke="#a48838"/><path d="M4 6h11l-3 7H1z" fill="#f6e4a8" stroke="#a48838"/>`
      : svg`<path d="M1 3h5l1 1h8v9H1z" fill="url(#fg)" stroke="#9c8038"/><path d="M1 6h14" stroke="#fff4c4"/>`
    return TREE.map((n) => html`
      <div class="node">
        <svg class="chev" viewBox="0 0 10 8">${n.kids
          ? svg`<path d="M1 2l4 4 4-4" fill="none" stroke="#444" stroke-width="1.600"/>`
          : svg`<path d="M3 0l4 4-4 4" fill="none" stroke="#aaa" stroke-width="1.600"/>`}</svg>
        <svg class="fold" viewBox="0 0 16 14"><defs><linearGradient id="fg" x1="0" x2="1" y1="0" y2="1"><stop offset="0" stop-color="#fff0b0"/><stop offset="1" stop-color="#d49c20"/></linearGradient></defs>${folder(!!n.kids)}</svg>
        <span class="lab">${n.t}</span>
      </div>
      ${(n.kids || []).map((k, idx) => html`
        <div class="kid ${idx === n.kids!.length - 1 ? "last" : ""}">
          <div class="lbl ${k[3] ? "sel" : ""}">${ic(k[0], "tic")}<span>${k[1]}<span class="key">(${k[2]})</span></span></div>
        </div>`)}
    `)
  }

  renderSide() {
    return html`<div class="side">
      <div class="navhd">
        <span class="name">模块导航栏</span>
        <svg viewBox="0 0 10 10"><path d="M3 1h4v5H3zM1 6h8M5 6v4" fill="none" stroke="#fff" stroke-width="1.200"/></svg>
        <svg viewBox="0 0 10 10"><path d="M1 1l8 8M9 1l-8 8" stroke="#fff"/></svg>
      </div>
      <div class="btn b22">工程设置</div>
      <div class="btn b21">绘图输入</div>
      <div class="panel">
        <div class="pm">
          <svg viewBox="0 0 17 15"><path d="M.5 4.500h9M5 .5v8M8.500 10.500h8M12.500 6.500v8" stroke="#0d6258" stroke-width="2.400"/></svg>
          <svg viewBox="0 0 17 15"><path d="M0 4.500h9M7 10.500h9" stroke="#0d6258" stroke-width="2.400"/></svg>
        </div>
        <div class="treewrap">
          <div class="tree">${this.renderTree()}</div>
          <div class="sb">
            <div class="arr"><svg viewBox="0 0 9 6"><path d="M1 5l3.500-3.500L8 5" fill="none" stroke="#555" stroke-width="1.500"/></svg></div>
            <div class="thumb"></div>
            <div class="gap"></div>
            <div class="arr"><svg viewBox="0 0 9 6"><path d="M1 1l3.500 3.500L8 1" fill="none" stroke="#555" stroke-width="1.500"/></svg></div>
          </div>
        </div>
      </div>
      <div class="btn b22">单构件输入</div>
      <div class="btn b21">报表预览</div>
    </div>`
  }

  renderView() {
    const top = "#a9a9a9", side = "#878787", end = "#757575"
    return html`<div class="view"><svg viewBox="205 168 1161 480" shape-rendering="crispEdges">
      ${svg`
      <g fill="none" stroke-width="1.200">
        ${GREENS.map((p) => svg`<polyline points=${p} stroke="#008a00"/>`)}
        ${REDS.map((p) => svg`<polyline points=${p} stroke="#ff0000"/>`)}
        ${DIMREDS.map((p) => svg`<polyline points=${p} stroke="#800000"/>`)}
      </g>
      <g font-family="Liberation Sans" font-size="15" fill="#c8c8c8" text-anchor="middle">
        ${BUBBLES.map(([x, y, t]) => svg`<polygon points=${bubble(x, y)} fill="none" stroke="#008a00"/><text x=${x} y=${y + 5.5}>${t}</text>`)}
        <text x="1316" y="558">3300</text>
      </g>
      <polygon fill=${side} points="205,254 497,329.300 518.700,351 621,378.300 614,407.700 805.500,458 815.600,412.700 1079.600,481 1076,503.300 918.600,464.300 847.400,445 836,489.300 575,422 578,390 571,388 504,371.700 486,351 205,282.700"/>
      <polygon fill=${top} points="205,215 579.400,311.700 597,333.300 702.600,360 621,378.300 518.700,351 497,329.300 205,254"/>
      <polygon fill="#9b9b9b" points="497,329.300 579.400,311.700 597,333.300 518.700,351"/>
      <polygon fill=${end} points="621,378.300 702.600,360 696,390.700 614,407.700"/>
      <polygon fill=${top} points="614,407.700 696,390.700 812,419 805.500,458"/>
      <polygon fill=${top} points="815.600,412.700 896,395 1162.800,463.300 1079.600,481"/>
      <polygon fill=${end} points="1079.600,481 1162.800,463.300 1158,486.700 1076,503.300"/>
      <polygon fill="#747474" points="847.400,445 918.600,464.300 918.600,472.700 836,489.300"/>
      <line x1="518.700" y1="351" x2="597" y2="333.300" stroke="#6a6a6a" stroke-dasharray="2 3"/>
      <line x1="541" y1="319.300" x2="555.700" y2="335" stroke="#555"/>
      <polyline points="575,422 836,489.300" fill="none" stroke="#ff0000"/>
      <g fill="none" shape-rendering="auto">
        <circle cx="785" cy="408" r="213" stroke="#cfcfcf" stroke-opacity=".65"/>
        <circle cx="785" cy="194" r="13" stroke="#8c8c8c"/>
        <circle cx="785" cy="621" r="13" stroke="#8c8c8c"/>
        <circle cx="571" cy="408" r="13" stroke="#9c9c9c"/>
        <circle cx="998" cy="408" r="13" stroke="#8c8c8c"/>
      </g>
      <g shape-rendering="auto">
        <path d="M261 597L269 560" stroke="#0a78ff" stroke-width="4"/>
        <path d="M270 551l5 17-9-2z" fill="#0a78ff"/>
        <text x="258" y="552" font-family="Liberation Sans" font-size="13" fill="#0a78ff">Z</text>
        <path d="M261 598l38 10" stroke="#ff0000" stroke-width="4"/>
        <path d="M308 611l-12-8-2 10z" fill="#ff0000"/>
        <path d="M303 607l4-5" stroke="#ff0000"/>
        <rect x="258" y="596" width="5" height="4" fill="#3ae03a"/>
        <path d="M274 597l4 4 4-4M278 601v4" fill="none" stroke="#20c020"/>
      </g>`}
    </svg></div>`
  }

  renderBelow() {
    return html`
      <div class="row snaprow">${this.bar(SNAP)}</div>
      <div class="row ctlrow">
        ${this.bar(ORTHO)}
        <div class="tb">
          <div class="grip"></div>
          <div class="combo off"><span>不偏移</span><div class="caret"></div></div>
          <div class="sep sp1"></div>
          <span>X=</span><div class="spin">0<div class="sa"><div class="up"></div><div class="down"></div></div></div>
          <span>mm</span><span class="yl">Y=</span>
          <div class="spin">0<div class="sa"><div class="up"></div><div class="down"></div></div></div>
          <span>mm</span><div class="sep"></div>
          <div class="chk"></div><span class="black">旋转</span>
          <div class="spin w rot">0.000<div class="sa"><div class="up"></div><div class="down"></div></div></div>
          <span>°</span>
        </div>
      </div>`
  }

  renderStatus() {
    const cell = (w: number, t: any) => html`<div class="cell" style="width:${w}px">${t}</div>`
    return html`<div class="status">
      ${cell(148, "X=393964 Y=75341")}
      ${cell(78, html`<b>层高</b>:3.55m`)}
      ${cell(98, html`<b>底标高</b>:-3.58m`)}
      ${cell(48, "0")}
      ${cell(914, "")}
      ${cell(70, "517.9 FPS")}
    </div>`
  }

  renderTask() {
    const ti = (body: any, cls = "") => html`<div class="tile ${cls}"><svg viewBox="0 0 24 24">${body}</svg></div>`
    return html`<div class="task">
      <div class="start"><svg viewBox="0 0 17 17"><path d="M0 2.500l7-1v6.500H0zM8 1.300L17 0v8H8zM0 9h7v6.500l-7-1zM8 9h9v8l-9-1.300z" fill="#fff"/></svg></div>
      <div class="search">
        <svg class="ring" viewBox="0 0 21 21"><circle cx="10.500" cy="10.500" r="9" fill="none" stroke="#ddd" stroke-width="2.500"/></svg>
        <span>在这里输入你要搜索的内容</span>
        <svg class="mic" viewBox="0 0 14 17"><rect x="4" y="0.500" width="6" height="11" rx="3" fill="none" stroke="#999"/><path d="M1.500 7v1a5.500 5.500 0 0 0 11 0V7M7 14v3M4 16.500h6" fill="none" stroke="#999"/></svg>
      </div>
      ${ti(svg`<path d="M7 4h10v16H7z" fill="none" stroke="#fff" stroke-width="1.500"/><path d="M4 6H2v12h2M20 6h2v12h-2" fill="none" stroke="#fff"/>`)}
      ${ti(svg`<g fill="#eee"><path d="M11 11C3 11 2 7 3 4s6-3 8 0 1 7 0 7z"/><path d="M13 11c0-8 4-9 7-8s3 6 0 8-7 0-7 0z"/><path d="M13 13c8 0 9 4 8 7s-6 3-8 0-1-7 0-7z"/><path d="M11 13c0 8-4 9-7 8s-3-6 0-8 7 0 7 0z"/></g>`)}
      ${ti(svg`<path d="M5 13h14c0-5-3-8-7-8s-7 4-7 8 3 7 7 7c3 0 5-1 6-3" fill="none" stroke="#eee" stroke-width="2.600"/><path d="M2 21c0-8 10-18 19-18" fill="none" stroke="#bbb" stroke-width="1.400"/>`)}
      ${ti(svg`<path d="M12 3a9 9 0 1 0 9 9c0-4-3-6-6-6a5 5 0 0 0-5 5c0 3 3 4 5 3" fill="none" stroke="#ccc" stroke-width="2"/><path d="M4 6q8-5 15 0" fill="none" stroke="#999"/>`)}
      ${ti(svg`<path d="M5 13h14c0-5-3-8-7-8-6 0-10 6-9 11 1-1 2-3 4-3 0 4 3 7 7 7 2 0 4-1 5-2" fill="none" stroke="#0f7ce0" stroke-width="4"/>`)}
      ${ti(svg`<path d="M3 8h18v14H3z" fill="#fff"/><path d="M8 8V4a4 4 0 0 1 8 0v4" fill="none" stroke="#fff"/><path d="M7 11h4.500v4.500H7z" fill="#f25022"/><path d="M12.500 11H17v4.500h-4.500z" fill="#7fba00"/><path d="M7 16.500h4.500V21H7z" fill="#00a4ef"/><path d="M12.500 16.500H17V21h-4.500z" fill="#ffb900"/>`)}
      ${ti(svg`<path d="M2 4h8l2 2h10v15H2z" fill="#f4d060"/><path d="M2 9h20v12H2z" fill="#fbe58e"/><path d="M7 15h10v6H7z" fill="#3a94dc"/>`, "n")}
      ${ti(svg`<path d="M5 13h15c0-6-4-8-8-8-5 0-9 4-9 9s4 7 8 7c3 0 6-1 7-3" fill="none" stroke="#1f8fe8" stroke-width="3.400"/><path d="M1 22C1 12 13 1 23 2" fill="none" stroke="#f0c030" stroke-width="1.600"/>`, "n")}
      ${ti(svg`<path d="M12 1C6 2 3 8 3 13s4 10 10 10 9-3 9-8H12v3h6c-1 2-3 2-5 2-4 0-6-3-6-7s3-8 7-9l5 3 2-4-5-2z" fill="#1c8fe8"/>`, "n run")}
      ${ti(svg`<circle cx="12" cy="13" r="10" fill="#5ab83a"/><path d="M6 13h12c0-4-3-6-6-6s-6 3-6 7 3 6 6 6c2 0 4-1 5-2" fill="none" stroke="#fff" stroke-width="2"/><path d="M14 1l4 2" stroke="#2a7a1a" stroke-width="2"/>`, "n run")}
      ${ti(svg`<rect x="1" y="1" width="22" height="22" rx="2" fill="#e89018"/><path d="M5 6l10-2 3 14-10 2z" fill="#f8ecc4"/><path d="M7 9l7-1M7 12l7-1M8 15l7-1" stroke="#a08040"/><path d="M21 3l1 1-7 10-2 1z" fill="#c03020"/>`, "n run")}
      ${ti(svg`<rect x="0" y="0" width="24" height="24" rx="3" fill="#0a84e8"/><path d="M12 4v17M5 12h14M12 8a3.500 3.500 0 0 1 7 0v4M5 12v3a3.500 3.500 0 0 0 7 0" fill="none" stroke="#fff" stroke-width="2.200"/>`, "n run act")}
      <div class="cpu"><div>59%</div><div>CPU使用</div></div>
      <div class="tray">
        <svg class="up1" viewBox="0 0 16 16"><path d="M1 11l7-7 7 7" fill="none" stroke="#fff" stroke-width="1.500"/></svg>
        <svg class="m10" viewBox="0 0 16 16"><rect x="3" y="5" width="12" height="8" fill="#ddd"/><path d="M0 3h6M3 1v5" stroke="#fff"/></svg>
        <svg class="m10" viewBox="0 0 16 16"><path d="M1 7a11 11 0 0 1 14 0M3.500 10a7 7 0 0 1 9 0M6 13a3.500 3.500 0 0 1 4 0" transform="rotate(-30 8 8)" fill="none" stroke="#bbb" stroke-dasharray="2 1"/></svg>
        <svg class="m7" viewBox="0 0 16 16"><path d="M1 6h3l4-4v12l-4-4H1z" fill="none" stroke="#fff"/><path d="M11 5q2 3 0 6M13 3q4 5 0 10" fill="none" stroke="#aaa"/></svg>
        <svg class="kb" viewBox="0 0 22 16"><rect x=".5" y="1.500" width="21" height="13" fill="none" stroke="#fff"/><path d="M3 5h16M3 8h16M6 11h10" stroke="#fff" stroke-dasharray="2 1"/></svg>
        <span class="zh">中</span>
        <svg viewBox="0 0 16 16"><path d="M1 3l12-3 3 12-12 4z" fill="#e84a20"/><path d="M11 4.500L6 6l5 3-5 2" fill="none" stroke="#fff" stroke-width="1.800"/></svg>
        <div class="clock"><div>15:17</div><div>2017/12/2</div></div>
        <div class="note">
          <svg viewBox="0 0 16 16"><path d="M0 1h16v10H7l-3 4v-4H0z" fill="#fff"/><path d="M3 4h10M3 7h10" stroke="#333"/></svg>
          <div class="badge">20</div>
        </div>
      </div>
    </div>`
  }

  render() {
    return html`<div class="shell">
      ${this.renderTitle()}
      ${this.renderMenu()}
      <div class="row r1">${this.bar(ROW1A)}${this.bar(ROW1B)}${this.bar(ROW1C)}</div>
      <div class="main">
        ${this.renderSide()}
        <div class="work">
          <div class="row r2">${this.bar(ROW2)}</div>
          <div class="row r3">${this.bar(ROW3A)}${this.bar(ROW3B)}</div>
          <div class="row r4">${this.bar(ROW4)}${this.bar([GRIP])}</div>
          ${this.renderView()}
          ${this.renderBelow()}
        </div>
      </div>
      ${this.renderStatus()}
      ${this.renderTask()}
      <div class="imetop"></div>
      <div class="ime">
        <span class="zh">中</span><span class="pt">°,</span>
        <svg viewBox="0 0 16 16"><circle cx="8" cy="8" r="7" fill="none" stroke="#1f74c8" stroke-width="1.500"/><circle cx="5.500" cy="6" r="1" fill="#1f74c8"/><circle cx="10.500" cy="6" r="1" fill="#1f74c8"/><path d="M4.500 10q3.500 3 7 0" fill="none" stroke="#1f74c8"/></svg>
        <svg viewBox="0 0 16 16"><rect x="5" y="0" width="6" height="10" rx="3" fill="#1f74c8"/><path d="M2.500 7a5.500 5 0 0 0 11 0M8 12v3M4 15.500h8" fill="none" stroke="#1f74c8" stroke-width="1.300"/></svg>
        <svg viewBox="0 0 16 16"><rect x="0" y="2" width="16" height="12" rx="1" fill="#1f74c8"/><path d="M2 5h12M2 8h12M4 11h8" stroke="#fff" stroke-dasharray="1.500 1"/></svg>
        <svg viewBox="0 0 16 16"><circle cx="6" cy="4" r="3" fill="#a8b4c0"/><path d="M1 13q0-6 5-6t5 6z" fill="#a8b4c0"/><rect x="8" y="9" width="8" height="6" fill="#c4ccd4"/></svg>
        <svg viewBox="0 0 16 16"><path d="M5 1h6l4 3-2 3-1-1v9H4V6L3 7 1 4z" fill="#1f74c8"/></svg>
        <svg viewBox="0 0 16 16"><path d="M2 15l-1-2 7-7a4 4 0 0 1 5-5l-2.500 2.500 2 2L15 3a4 4 0 0 1-5 5z" fill="#1f74c8"/></svg>
      </div>
      <svg class="imes" viewBox="0 0 26 26"><path d="M1 6l18-5 6 18-18 6z" fill="#f0541e"/><path d="M18 8l-9 2.500 9 4-9 3" fill="none" stroke="#fff" stroke-width="3.200"/></svg>
    </div>`
  }
}
